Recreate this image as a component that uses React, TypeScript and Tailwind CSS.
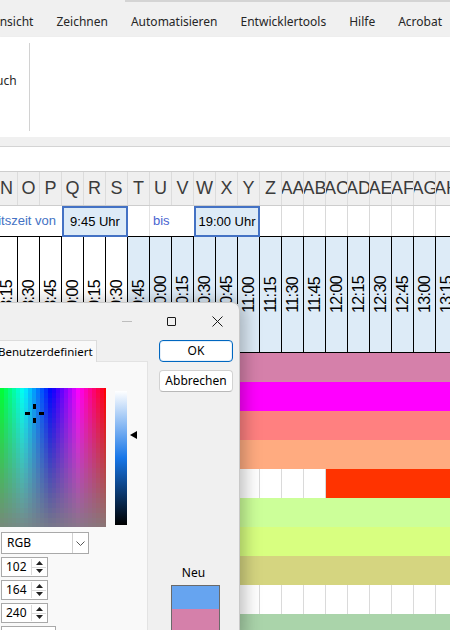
import React from "react";

const COLS = ["N", "O", "P", "Q", "R", "S", "T", "U", "V", "W", "X", "Y", "Z", "AA", "AB", "AC", "AD", "AE", "AF", "AG", "AH"];
const TIMES = ["8:15", "8:30", "8:45", "9:00", "9:15", "9:30", "9:45", "10:00", "10:15", "10:30", "10:45", "11:00", "11:15", "11:30", "11:45", "12:00", "12:15", "12:30", "12:45", "13:00", "13:15"];

// fill of each task row; null = empty row with grid lines, "split" = empty up to AC, then red
const ROWS: (string | null)[] = ["#d580aa", "#ff00ff", "#ff8080", "#ffab80", "split", "#ccff99", "#d8ff80", "#d5d580", null, "#aad4aa"];

const TABS = ["Ansicht", "Zeichnen", "Automatisieren", "Entwicklertools", "Hilfe", "Acrobat"];

function Spectrum() {
  const cells: React.ReactNode[] = [];
  for (let cx = 0; cx < 27; cx++) {
    for (let cy = 0; cy < 28; cy++) {
      const x = cx * 4;
      const y = cy * 5;
      const hue = 120 + ((x + 6) / 110) * 240;
      const sat = 100 - ((y + 2.5) / 139) * 92;
      cells.push(<rect key={cx + "-" + cy} x={x} y={y} width={4} height={5} fill={`hsl(${hue} ${sat}% 50%)`} />);
    }
  }
  return (
    <svg width={106} height={139} shapeRendering="crispEdges" className="shrink-0">
      {cells}
      <rect x={33} y={16} width={3} height={5} fill="#000" />
      <rect x={33} y={30} width={3} height={5} fill="#000" />
      <rect x={25} y={24} width={5} height={3} fill="#000" />
      <rect x={39} y={24} width={5} height={3} fill="#000" />
    </svg>
  );
}

function LumBar() {
  return (
    <svg width={24} height={139} className="ml-[9px] shrink-0">
      <defs>
        <linearGradient id="lum" x1="0" y1="0" x2="0" y2="1">
          <stop offset="0" stopColor="#ffffff" />
          <stop offset="0.5" stopColor="#1776e8" />
          <stop offset="1" stopColor="#000000" />
        </linearGradient>
      </defs>
      <rect x={0} y={3} width={12} height={134} fill="url(#lum)" />
      <polygon points="15,47 22,43 22,51" fill="#000" />
    </svg>
  );
}

function Spin({ value, wide }: { value: string; wide?: boolean }) {
  return (
    <div className={`flex h-[20px] border border-[#a9a9a9] bg-white ${wide ? "w-[55px]" : "w-[47px]"}`}>
      <span className="flex-1 pl-[4px] text-[12px] leading-[18px] text-black">{value}</span>
      {!wide && (
        <div className="my-[1px] mr-[1px] flex w-[15px] flex-col border-l border-[#dadada]">
          <div className="flex flex-1 items-center justify-center border-b border-[#dadada]">
            <svg width="7" height="4"><polygon points="0,4 3.5,0 7,4" fill="#222" /></svg>
          </div>
          <div className="flex flex-1 items-center justify-center">
            <svg width="7" height="4"><polygon points="0,0 3.5,4 7,0" fill="#222" /></svg>
          </div>
        </div>
      )}
    </div>
  );
}

function ColorDialog() {
  return (
    <div className="absolute left-0 top-[302px] h-[340px] w-[240px] rounded-tr-[8px] border-r border-t border-[#c9c9c9] bg-[#f0f0f0] font-['Noto_Sans',sans-serif] text-[12px] text-black shadow-[4px_0_18px_rgba(0,0,0,0.28)]">
      {/* title bar */}
      <div className="flex h-[37px] items-center">
        <div className="ml-[122px] h-px w-[10px] bg-[#bdbdbd]" />
        <div className="ml-[35px] h-[9px] w-[9px] rounded-[1px] border border-[#1a1a1a]" />
        <svg width="11" height="11" className="ml-[36px]">
          <path d="M0.5 0.5 L10.5 10.5 M10.5 0.5 L0.5 10.5" stroke="#1a1a1a" strokeWidth="1" />
        </svg>
      </div>
      <div className="flex">
        {/* left: tabs + panel */}
        <div className="w-[148px] shrink-0">
          <div className="flex h-[22px]">
            <div className="relative z-10 -ml-[3px] h-[22px] w-[100px] overflow-hidden whitespace-nowrap border-r border-t border-[#dcdcdc] bg-[#f9f9f9] pl-[1px] text-[11.5px] leading-[21px]">
              Benutzerdefiniert
            </div>
          </div>
          <div className="-mt-px h-[300px] border-r border-t border-[#e3e3e3] bg-[#f9f9f9] pt-[26px]">
            <div className="flex items-start">
              <Spectrum />
              <LumBar />
            </div>
            <div className="ml-[1px] mt-[5px] flex h-[22px] w-[88px] border border-[#a9a9a9] bg-white">
              <span className="flex-1 pl-[5px] leading-[20px]">RGB</span>
              <div className="flex w-[16px] items-center justify-center border-l border-[#d0d0d0]">
                <svg width="9" height="5"><path d="M0.5 0.5 L4.5 4.5 L8.5 0.5" fill="none" stroke="#555" strokeWidth="1" /></svg>
              </div>
            </div>
            <div className="ml-[1px] mt-[3px] flex flex-col gap-[3px]">
              <Spin value="102" />
              <Spin value="164" />
              <Spin value="240" />
              <Spin value="" wide />
            </div>
          </div>
        </div>
        {/* right: buttons + preview */}
        <div className="flex flex-1 flex-col">
          <button className="ml-[11px] h-[22px] w-[74px] rounded-[4px] border border-[#0067c0] bg-white leading-[20px] shadow-[inset_0_0_0_1px_#e6f0fa]">
            OK
          </button>
          <button className="ml-[11px] mt-[8px] h-[22px] w-[74px] rounded-[4px] border border-[#d2d2d2] border-b-[#b8b8b8] bg-white leading-[20px]">
            Abbrechen
          </button>
          <div className="mt-[173px] h-[16px] text-center leading-[16px]">Neu</div>
          <div className="ml-[23px] mt-[4px] w-[49px] border border-[#6a6a6a]">
            <div className="h-[23px] bg-[#66a4f0]" />
            <div className="h-[30px] bg-[#d580aa]" />
          </div>
        </div>
      </div>
    </div>
  );
}

export default function App() {
  return (
    <div className="relative h-[630px] w-[450px] overflow-hidden bg-white font-['Liberation_Sans',Arial,sans-serif]">
      {/* ribbon tabs */}
      <div className="h-[37px] bg-[#f0f0f0]">
        <div className="ml-[125px] h-[2px] bg-[#d4d4d4]" />
        <div className="-ml-[8px] mt-[11px] flex gap-[23px] whitespace-nowrap font-['Noto_Sans',sans-serif] text-[12px] leading-[18px] text-[#262626]">
          {TABS.map((t) => (
            <span key={t}>{t}</span>
          ))}
        </div>
      </div>
      {/* ribbon body */}
      <div className="flex h-[100px] bg-white shadow-[0_1px_2px_rgba(0,0,0,0.15)]">
        <div className="w-[29px] pt-[35px] font-['Noto_Sans',sans-serif] text-[12px] leading-[18px] text-[#262626]">
          <span className="-ml-[4px]">uch</span>
        </div>
        <div className="mt-[6px] h-[88px] w-px bg-[#d2d2d2]" />
      </div>
      <div className="h-[9px] bg-[#f0f0f0]" />
      {/* formula bar area */}
      <div className="h-[25px] border-t border-[#d4d4d4] bg-white" />

      {/* sheet */}
      <div className="-ml-[4px] w-[462px]">
        <div className="flex h-[35px] border-y border-[#cdcdcd] bg-[#efefef]">
          {COLS.map((c) => (
            <div key={c} className="flex w-[22px] shrink-0 justify-center overflow-hidden border-r border-[#dcdcdc] text-[18px] leading-[33px] text-[#3b3b3b]">
              <span className="whitespace-nowrap">{c}</span>
            </div>
          ))}
        </div>
        <div className="flex h-[30px] text-[13px] leading-[30px]">
          <div className="flex w-[66px] shrink-0 justify-end overflow-hidden whitespace-nowrap pr-[6px] text-[#4472c4]">
            <span className="shrink-0">Arbeitszeit von</span>
          </div>
          <div className="relative z-10 -mb-px h-[31px] w-[66px] shrink-0 border-2 border-[#4472c4] bg-[#ddebf7] text-center leading-[27px] text-black">
            9:45 Uhr
          </div>
          <div className="w-[22px] shrink-0 border-r border-[#e3e3e3]" />
          <div className="w-[44px] shrink-0 pl-[3px] text-[#4a64d0]">bis</div>
          <div className="relative z-10 -mb-px h-[31px] w-[66px] shrink-0 border-2 border-[#4472c4] bg-[#ddebf7] text-center leading-[27px] text-black">
            19:00 Uhr
          </div>
          {COLS.slice(12).map((c) => (
            <div key={c} className="w-[22px] shrink-0 border-r border-[#d9d9d9]" />
          ))}
        </div>
        <div className="flex h-[117px] border-y border-black">
          {TIMES.map((t, i) => (
            <div
              key={t}
              className={`flex w-[22px] shrink-0 items-center justify-center border-r border-black ${i >= 6 ? "bg-[#ddebf7]" : "bg-white"}`}
            >
              <span className="rotate-180 whitespace-nowrap text-[16px] leading-[20px] tracking-[-0.6px] text-black [writing-mode:vertical-rl]">{t}</span>
            </div>
          ))}
        </div>
        {ROWS.map((fill, r) =>
          fill === null || fill === "split" ? (
            <div key={r} className="flex h-[29px]">
              {COLS.map((c, i) =>
                fill === "split" && i >= 15 ? (
                  <div key={c} className="w-[22px] shrink-0 bg-[#ff3300]" />
                ) : (
                  <div key={c} className="w-[22px] shrink-0 border-r border-[#dadada]" />
                )
              )}
            </div>
          ) : (
            <div key={r} className="h-[29px]" style={{ backgroundColor: fill }} />
          )
        )}
      </div>

      <ColorDialog />
    </div>
  );
}
